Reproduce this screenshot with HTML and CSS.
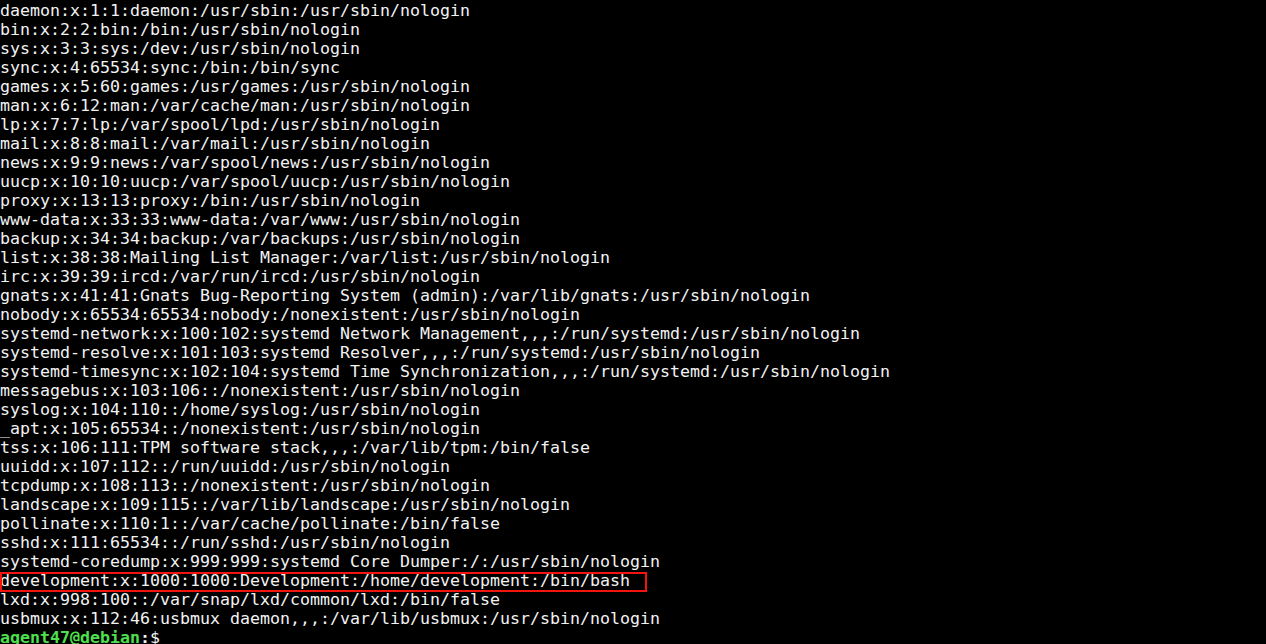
FILE: index.html
```html
<!DOCTYPE html>
<html>
<head>
<meta charset="utf-8">
<link rel="stylesheet" href="styles.css">
</head>
<body>
<div class="term">
<div class="line">daemon:x:1:1:daemon:/usr/sbin:/usr/sbin/nologin</div>
<div class="line">bin:x:2:2:bin:/bin:/usr/sbin/nologin</div>
<div class="line">sys:x:3:3:sys:/dev:/usr/sbin/nologin</div>
<div class="line">sync:x:4:65534:sync:/bin:/bin/sync</div>
<div class="line">games:x:5:60:games:/usr/games:/usr/sbin/nologin</div>
<div class="line">man:x:6:12:man:/var/cache/man:/usr/sbin/nologin</div>
<div class="line">lp:x:7:7:lp:/var/spool/lpd:/usr/sbin/nologin</div>
<div class="line">mail:x:8:8:mail:/var/mail:/usr/sbin/nologin</div>
<div class="line">news:x:9:9:news:/var/spool/news:/usr/sbin/nologin</div>
<div class="line">uucp:x:10:10:uucp:/var/spool/uucp:/usr/sbin/nologin</div>
<div class="line">proxy:x:13:13:proxy:/bin:/usr/sbin/nologin</div>
<div class="line">www-data:x:33:33:www-data:/var/www:/usr/sbin/nologin</div>
<div class="line">backup:x:34:34:backup:/var/backups:/usr/sbin/nologin</div>
<div class="line">list:x:38:38:Mailing List Manager:/var/list:/usr/sbin/nologin</div>
<div class="line">irc:x:39:39:ircd:/var/run/ircd:/usr/sbin/nologin</div>
<div class="line">gnats:x:41:41:Gnats Bug-Reporting System (admin):/var/lib/gnats:/usr/sbin/nologin</div>
<div class="line">nobody:x:65534:65534:nobody:/nonexistent:/usr/sbin/nologin</div>
<div class="line">systemd-network:x:100:102:systemd Network Management,,,:/run/systemd:/usr/sbin/nologin</div>
<div class="line">systemd-resolve:x:101:103:systemd Resolver,,,:/run/systemd:/usr/sbin/nologin</div>
<div class="line">systemd-timesync:x:102:104:systemd Time Synchronization,,,:/run/systemd:/usr/sbin/nologin</div>
<div class="line">messagebus:x:103:106::/nonexistent:/usr/sbin/nologin</div>
<div class="line">syslog:x:104:110::/home/syslog:/usr/sbin/nologin</div>
<div class="line">_apt:x:105:65534::/nonexistent:/usr/sbin/nologin</div>
<div class="line">tss:x:106:111:TPM software stack,,,:/var/lib/tpm:/bin/false</div>
<div class="line">uuidd:x:107:112::/run/uuidd:/usr/sbin/nologin</div>
<div class="line">tcpdump:x:108:113::/nonexistent:/usr/sbin/nologin</div>
<div class="line">landscape:x:109:115::/var/lib/landscape:/usr/sbin/nologin</div>
<div class="line">pollinate:x:110:1::/var/cache/pollinate:/bin/false</div>
<div class="line">sshd:x:111:65534::/run/sshd:/usr/sbin/nologin</div>
<div class="line">systemd-coredump:x:999:999:systemd Core Dumper:/:/usr/sbin/nologin</div>
<div class="line"><span class="mark">development:x:1000:1000:Development:/home/development:/bin/bash</span></div>
<div class="line">lxd:x:998:100::/var/snap/lxd/common/lxd:/bin/false</div>
<div class="line">usbmux:x:112:46:usbmux daemon,,,:/var/lib/usbmux:/usr/sbin/nologin</div>
<div class="line"><span class="user">agent47@debian</span><span class="colon">:</span>$</div>
</div>
</body>
</html>
```
FILE: styles.css
```css
html, body {
  margin: 0;
  padding: 0;
  background: #000;
  height: 100%;
  overflow: hidden;
}
.term {
  padding-top: 1px;
  color: #f2f2f2;
  font-family: "DejaVu Sans Mono", monospace;
  font-size: 16.61px;
  line-height: 19px;
}
.line {
  height: 19px;
  white-space: pre;
}
.mark {
  position: relative;
}
.mark::after {
  content: "";
  position: absolute;
  left: 0;
  top: 1px;
  width: 647px;
  height: 20px;
  border: 2px solid #f2140f;
  box-sizing: border-box;
}
.user {
  color: #4fe04f;
  font-weight: bold;
}
.colon {
  font-weight: bold;
}
```
